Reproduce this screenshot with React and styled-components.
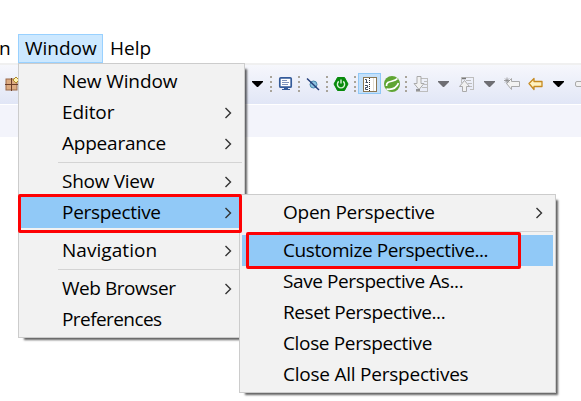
import React from "react";
import styled, { createGlobalStyle } from "styled-components";

const Global = createGlobalStyle`
  * { box-sizing: border-box; }
  body { margin: 0; background: #fff; overflow: hidden; }
`;

const Screen = styled.div`
  position: relative;
  width: 581px;
  height: 401px;
  overflow: hidden;
  padding-top: 34px;
  background: #fff;
  color: #000;
  font: 19px/28px "Open Sans", "Noto Sans", sans-serif;
`;

const MenuBar = styled.nav`
  display: flex;
  height: 29px;
`;

const BarItem = styled.div`
  width: ${(p) => p.$width}px;
  height: 29px;
  padding-left: ${(p) => p.$pad || 0}px;
  line-height: 26px;
  text-indent: ${(p) => p.$indent || 0}px;
  white-space: nowrap;
  border: 1px solid ${(p) => (p.$active ? "#99d1ff" : "transparent")};
  background: ${(p) => (p.$active ? "#cce8ff" : "transparent")};
`;

const Toolbar = styled.div`
  display: flex;
  height: 41px;
  border-top: 2px solid #f0f0f0;
  background: linear-gradient(#f6f7fc, #e1e6f6);
`;

const ToolIcons = styled.svg`
  display: block;
  width: 581px;
  height: 39px;
  flex: none;
`;

const SubBar = styled.div`
  height: 33px;
  border-top: 1px solid #fff;
  background: #f3f4fb;
`;

const Menu = styled.div`
  position: absolute;
  left: ${(p) => p.$left}px;
  top: ${(p) => p.$top}px;
  width: ${(p) => p.$width}px;
  padding: 2px;
  border: 1px solid #ccc;
  background: #f2f2f2;
  box-shadow: 4px 4px 2px -2px rgba(0, 0, 0, 0.62);
`;

const Row = styled.div`
  display: flex;
  align-items: center;
  justify-content: space-between;
  height: 31px;
  padding: 0 10px 0 41px;
  white-space: nowrap;
  background: ${(p) => (p.$active ? "#91c9f7" : "transparent")};
`;

const Label = styled.span`
  padding-bottom: 2px;
  letter-spacing: ${(p) => p.$track || 0}px;
`;

const Chevron = styled.svg`
  width: 8px;
  height: 12px;
  flex: none;
`;

const Separator = styled.div`
  height: 7px;
  margin-left: 37px;
  padding-top: 3px;
  &::before {
    content: "";
    display: block;
    height: 1px;
    background: #d4d4d4;
  }
`;

const Highlight = styled.div`
  position: absolute;
  left: ${(p) => p.$left}px;
  top: ${(p) => p.$top}px;
  width: ${(p) => p.$width}px;
  height: ${(p) => p.$height}px;
  border: 3px solid #fe0204;
  border-radius: 2px;
`;

const windowMenu = [
  { text: "New Window", track: -0.1 },
  { text: "Editor", sub: true, track: -0.1 },
  { text: "Appearance", sub: true, track: -0.22 },
  null,
  { text: "Show View", sub: true, track: -0.28 },
  { text: "Perspective", sub: true, active: true, track: -0.3 },
  null,
  { text: "Navigation", sub: true, track: 0.05 },
  null,
  { text: "Web Browser", sub: true, track: -0.45 },
  { text: "Preferences", track: -0.57 },
];

const perspectiveMenu = [
  { text: "Open Perspective", sub: true, track: -0.25 },
  null,
  { text: "Customize Perspective...", active: true, track: -0.4 },
  { text: "Save Perspective As...", track: -0.4 },
  { text: "Reset Perspective...", track: -0.43 },
  { text: "Close Perspective", track: -0.35 },
  { text: "Close All Perspectives", track: -0.23 },
];

function Items({ items }) {
  return items.map((item, i) =>
    item ? (
      <Row key={i} $active={item.active}>
        <Label $track={item.track}>{item.text}</Label>
        {item.sub && (
          <Chevron viewBox="0 0 8 12">
            <path d="M1.500 1 6.500 6l-5 5" fill="none" stroke="#333" strokeWidth="1.400" />
          </Chevron>
        )}
      </Row>
    ) : (
      <Separator key={i} />
    )
  );
}

const Grip = ({ x }) => (
  <g fill="#a9a49a">
    {[76, 81, 86, 90].map((y) => (
      <rect key={y} x={x} y={y} width="2" height="2" />
    ))}
  </g>
);

const Caret = ({ x, color }) => <path d={`M${x} 81h11v1l-5 5h-1l-5-5z`} fill={color} />;

const ARROW = "M1 6 6 1v3h8v5H6v3z";

function Icons() {
  return (
    <ToolIcons viewBox="0 65 581 39">
      {/* new package */}
      <g>
        <rect x="6" y="79" width="11" height="11" fill="#dcab82" stroke="#9a6a4a" />
        <path d="M11.500 78v13M5 84.500h13" stroke="#6b3d28" />
        <path d="m16 77 3 3-3 3-3-3z" fill="#fff3b0" stroke="#b08a28" />
      </g>
      <Caret x={252} color="#000" />
      <Grip x={270} />
      {/* console */}
      <g>
        <rect x="279.800" y="77.800" width="11.400" height="9.400" rx="1" fill="#fff" stroke="#345b9a" strokeWidth="1.700" />
        <path d="M282 80.500h5M282 82.500h7M282 84.500h6" stroke="#7f94bd" />
        <path d="M284 88h4v1h2v1h-8v-1h2z" fill="#345b9a" />
      </g>
      <Grip x={298} />
      {/* skip breakpoints */}
      <g>
        <circle cx="313.500" cy="84.500" r="3.500" fill="#8cc3df" stroke="#4a88ad" />
        <path d="m307 78.500 12 11.500" stroke="#263f7a" strokeWidth="1.500" />
      </g>
      <Grip x={326} />
      {/* boot dashboard */}
      <g>
        <path d="m337.500 77.500h7l3.500 6.500-3.500 6.500h-7L334 84z" fill="#078a0b" stroke="#078a0b" strokeLinejoin="round" />
        <path d="M338.800 81.400a3.600 3.600 0 1 0 4.400 0M341 79.500v4" fill="none" stroke="#d9f2d9" strokeWidth="1.400" />
      </g>
      <Grip x={354} />
      {/* line numbers toggle */}
      <g>
        <rect x="358.500" y="73.500" width="22" height="20" fill="#c3e0fa" stroke="#90c8f6" />
        <rect x="363.500" y="77.500" width="13" height="14" fill="#fff" stroke="#8a7652" />
        <path d="M365 79.500h1.500v3M365.500 82.500h2.500M365 85.500h2.500v2H365.500v2h2.500" fill="none" stroke="#3d4c63" />
        <path d="M369.500 78v13" stroke="#333" strokeDasharray="1 1" />
        <path d="M373.500 78v13" stroke="#e3ded2" />
      </g>
      {/* spring leaf */}
      <g>
        <circle cx="392" cy="84" r="8" fill="#5fa533" />
        <path d="M386.500 86c-.5-6 7.500-3.500 11-7.500" fill="none" stroke="#fff" strokeWidth="1.700" />
        <path d="M386.500 89.200c6 .8 10-1.200 12-6" fill="none" stroke="#fff" strokeWidth="1.700" />
      </g>
      <Grip x={405} />
      {/* next annotation */}
      <g>
        <path d="M421 78.500h6M424 81.500h3M424 84.500h3M422 87.500h5M416 91.500h11M427.500 78v14" stroke="#bdbdbd" />
        <path d="M417 76.500h4v7h3l-5 6-5-6h3z" fill="#f1f1f1" stroke="#aaa" />
        <path d="M416 90h4" stroke="#777" strokeWidth="1.500" />
      </g>
      <Caret x={438} color="#6e6e73" />
      {/* previous annotation */}
      <g>
        <path d="M461 77.500h12M466 80.500h5M468 83.500h4M469 86.500h3M470 89.500h3M473.500 77v13M461.500 77v6" stroke="#bdbdbd" />
        <path d="M462 78.500h4" stroke="#777" strokeWidth="1.500" />
        <path d="m464.500 80.500 5 6h-3v5h-4v-5h-3z" fill="#f1f1f1" stroke="#aaa" />
      </g>
      <Caret x={484} color="#6e6e73" />
      {/* last edit location */}
      <g>
        <path transform="translate(505.500 77.500)" d={ARROW} fill="#f3f3f3" stroke="#aaa" strokeLinejoin="round" />
        <path d="M504 80.500h6M507 77.500v6M505 78.500l4 4M509 78.500l-4 4" stroke="#8a8a8a" strokeWidth=".8" />
      </g>
      {/* back */}
      <path transform="translate(528 77.500)" d={ARROW} fill="#fff2c0" stroke="#c68a20" strokeWidth="1.300" strokeLinejoin="round" />
      <Caret x={553} color="#000" />
      {/* forward */}
      <path d="M585 81.500h-8a1.500 1.500 0 0 0-1.500 1.500v2a1.500 1.500 0 0 0 1.500 1.500h8" fill="#f1f1f1" stroke="#aaa" />
    </ToolIcons>
  );
}

export default function App() {
  return (
    <Screen>
      <Global />
      <MenuBar>
        <BarItem $width={18} $indent={-2}>n</BarItem>
        <BarItem $width={85} $pad={6} $active>Window</BarItem>
        <BarItem $width={60} $pad={6}>Help</BarItem>
      </MenuBar>
      <Toolbar>
        <Icons />
      </Toolbar>
      <SubBar />
      <Menu $left={18} $top={63} $width={227}>
        <Items items={windowMenu} />
      </Menu>
      <Menu $left={239} $top={194} $width={317}>
        <Items items={perspectiveMenu} />
      </Menu>
      <Highlight $left={18} $top={194} $width={224} $height={39} />
      <Highlight $left={246} $top={232} $width={275} $height={37} />
    </Screen>
  );
}
